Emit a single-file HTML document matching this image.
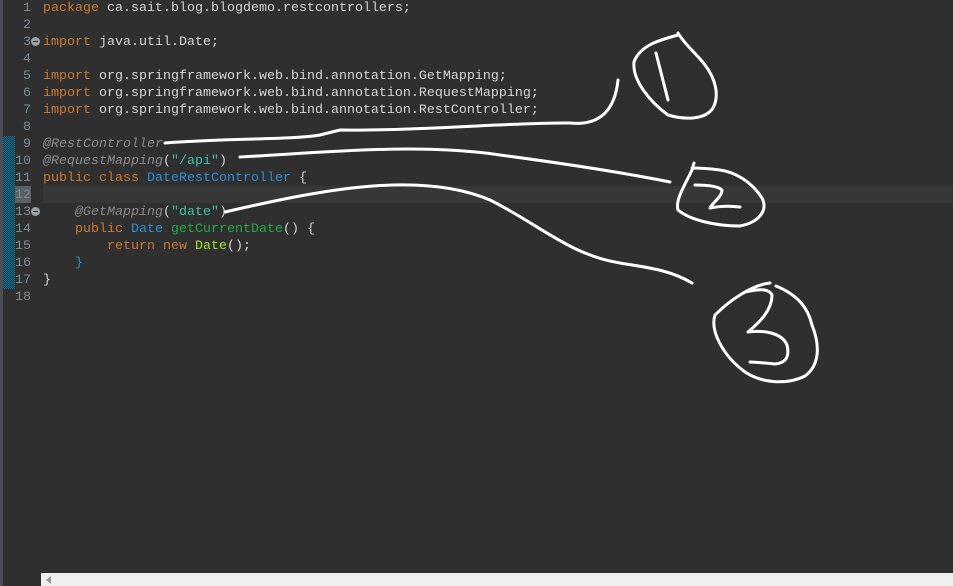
<!DOCTYPE html>
<html><head><meta charset="utf-8"><style>
html,body{margin:0;padding:0;width:953px;height:586px;overflow:hidden;background:#2f2f2f;}
.strip{position:absolute;left:0;top:0;width:3px;height:586px;background:#4b4e52;}
.chg{position:absolute;left:3px;top:136px;width:12px;height:153px;background:repeating-conic-gradient(#1c6a8a 0 25%,#123e52 0 50%) 0 0/2px 2px;}
.hl{position:absolute;left:43px;top:186px;width:910px;height:17px;background:#373737;}
.hln{position:absolute;left:15px;top:186px;width:16px;height:17px;background:#5a5f66;}
.code{position:absolute;left:0;top:0;font-family:"Liberation Mono",monospace;font-size:13.33px;line-height:17px;color:#d6d6d6;}
.ln{position:absolute;left:0;width:31px;text-align:right;color:#7d8b98;}
.tx{position:absolute;left:43px;white-space:pre;}
.k{color:#cc7832}.a{color:#8c8c8c;font-style:italic}.s{color:#3cc2a6}.c{color:#2e8fd6}.m{color:#22a84a}.y{color:#a6e22e}
.fold{position:absolute;left:31px;width:9px;height:9px;border-radius:50%;background:#9aa0a6;}
.fold:after{content:"";position:absolute;left:2px;top:4px;width:5px;height:1px;background:#2f2f2f;}
.sb{position:absolute;left:41px;top:573px;width:912px;height:13px;background:#efefef;}
.sb:after{content:"";position:absolute;left:5px;top:3px;border-right:5px solid #999;border-top:4px solid transparent;border-bottom:4px solid transparent;}
</style></head><body>
<div class="strip"></div>
<div class="chg"></div>
<div class="hl"></div><div class="hln"></div>
<div class="code">
<div class="ln" style="top:0">1</div><div class="tx" style="top:0"><span class="k">package</span> ca.sait.blog.blogdemo.restcontrollers;</div>
<div class="ln" style="top:17px">2</div>
<div class="ln" style="top:34px">3</div><div class="fold" style="top:37px"></div><div class="tx" style="top:34px"><span class="k">import</span> java.util.Date;</div>
<div class="ln" style="top:51px">4</div>
<div class="ln" style="top:68px">5</div><div class="tx" style="top:68px"><span class="k">import</span> org.springframework.web.bind.annotation.GetMapping;</div>
<div class="ln" style="top:85px">6</div><div class="tx" style="top:85px"><span class="k">import</span> org.springframework.web.bind.annotation.RequestMapping;</div>
<div class="ln" style="top:102px">7</div><div class="tx" style="top:102px"><span class="k">import</span> org.springframework.web.bind.annotation.RestController;</div>
<div class="ln" style="top:119px">8</div>
<div class="ln" style="top:136px">9</div><div class="tx" style="top:136px"><span class="a">@RestController</span></div>
<div class="ln" style="top:153px">10</div><div class="tx" style="top:153px"><span class="a">@RequestMapping</span>(<span class="s">"/api"</span>)</div>
<div class="ln" style="top:170px">11</div><div class="tx" style="top:170px"><span class="k">public class</span> <span class="c">DateRestController</span> {</div>
<div class="ln" style="top:187px">12</div>
<div class="ln" style="top:204px">13</div><div class="fold" style="top:207px"></div><div class="tx" style="top:204px">    <span class="a">@GetMapping</span>(<span class="s">"date"</span>)</div>
<div class="ln" style="top:221px">14</div><div class="tx" style="top:221px">    <span class="k">public</span> <span class="c">Date</span> <span class="m">getCurrentDate</span>() {</div>
<div class="ln" style="top:238px">15</div><div class="tx" style="top:238px">        <span class="k">return new</span> <span class="y">Date</span>();</div>
<div class="ln" style="top:255px">16</div><div class="tx" style="top:255px">    <span class="c">}</span></div>
<div class="ln" style="top:272px">17</div><div class="tx" style="top:272px">}</div>
<div class="ln" style="top:289px">18</div>
</div>
<svg width="953" height="586" style="position:absolute;left:0;top:0" fill="none" stroke="#fff" stroke-width="3" stroke-linecap="round" stroke-linejoin="round">
<path d="M165,143 C230,138 290,140 320,135 L340,130 C420,131 520,122 570,123 C600,126 615,110 618,80"/>
<path d="M678,35 C660,40 640,45 634,62 C632,80 650,102 668,115 C685,120 705,120 713,108 C720,95 715,78 705,65 C695,52 685,45 678,33"/>
<path d="M656,53 L668,100"/>
<path d="M240,157 C330,152 420,143 500,155 C560,163 620,172 670,182"/>
<path d="M694,163 L692,170 C685,185 675,200 678,210 C690,220 715,226 740,226 C760,222 768,210 762,198 C752,182 735,172 720,170 C705,168 695,168 692,168"/>
<path d="M695,185 C705,185 718,186 722,190 C722,197 712,203 710,208 C720,206 732,206 740,207"/>
<path d="M225,212 C320,190 420,170 490,200 C540,225 570,255 620,263 C650,268 670,270 692,283"/>
<path d="M770,283 C752,285 730,300 715,315 C710,330 722,355 745,372 C760,382 785,386 805,376 C820,365 820,345 812,325 C808,308 798,295 776,286"/>
<path d="M745,292 C755,290 768,287 772,295 C772,310 760,322 748,332 C765,330 782,333 787,345 C790,358 785,363 775,364 C765,363 755,362 750,362"/>
</svg>
<div class="sb"></div>
</body></html>
